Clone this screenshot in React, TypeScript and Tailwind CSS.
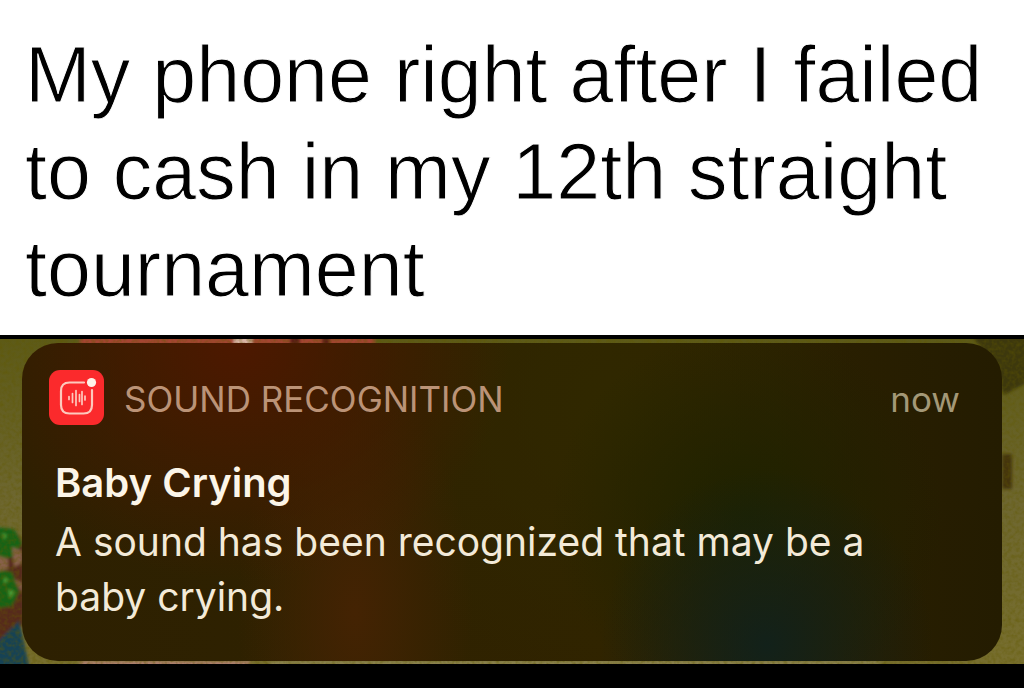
function SoundIcon() {
  return (
    <svg viewBox="0 0 55 55" className="size-[55px] shrink-0" aria-hidden="true">
      <rect width="55" height="55" rx="11" fill="#fb2a2c" />
      <path
        d="M35 12.500H20.500Q12 12.500 12 21V35Q12 43.500 20.500 43.500H34.500Q43 43.500 43 35V20"
        fill="none"
        stroke="#fdc9bd"
        strokeWidth="2.200"
        strokeLinecap="round"
      />
      <path
        d="M20 26.500v3M23.500 23.500v9M27 20.500v15M30.500 24.500v7M33 21.500v13M36 26v4"
        fill="none"
        stroke="#fdc9bd"
        strokeWidth="1.700"
        strokeLinecap="round"
      />
      <circle cx="42.500" cy="12.500" r="4.600" fill="#fff3e8" />
    </svg>
  );
}

function Garden() {
  return (
    <svg
      viewBox="0 0 1024 325"
      preserveAspectRatio="none"
      className="absolute inset-0 size-full"
      aria-hidden="true"
    >
      <defs>
        <filter id="soft" x="-20%" y="-20%" width="140%" height="140%">
          <feGaussianBlur stdDeviation="1.5" />
        </filter>
        <filter id="grain" x="0" y="0" width="100%" height="100%">
          <feTurbulence type="fractalNoise" baseFrequency="0.25" numOctaves="2" seed="4" />
          <feColorMatrix values="0 0 0 0 0.12  0 0 0 0 0.1  0 0 0 0 0  0 1.6 0 0 -0.6" />
        </filter>
        <linearGradient id="grass" x1="0" y1="0" x2="0" y2="1">
          <stop offset="0" stopColor="#5d5a18" />
          <stop offset="0.5" stopColor="#6e6730" />
          <stop offset="1" stopColor="#776e2e" />
        </linearGradient>
      </defs>
      <rect width="1024" height="325" fill="url(#grass)" />
      <g filter="url(#soft)">
        <path d="M80 -6H375V6H80z" fill="#a54432" />
        <path d="M234 -6h18v12h-18z" fill="#d9b3a4" />
        <path d="M290 -6h10v12h-10zM322 -6h8v12h-8z" fill="#5a1d12" />
        <path d="M970 -6H1030V42L1004 56L985 14z" fill="#3c3909" />
        <path d="M1002 115h10v35h-10z" fill="#45340f" />
        <path d="M-6 190Q20 185 24 210V285L-6 310z" fill="#572b1b" />
        <path d="M-6 188l20 2 8 14-8 14-20 3zM-6 230l18 3 7 20-7 14-18 3z" fill="#176416" />
        <path d="M12 208l10 4v12l-8 4zM-4 216l12 4v10l-12 3zM14 240l8 4v10z" fill="#87604a" />
        <path d="M2 194l5 2-3 5zM8 250l7 3-5 7zM4 238l5 3-5 4z" fill="#4c9b35" />
        <path d="M-6 306L19 282L30 331H-6z" fill="#174354" />
        <path d="M80 322H250V331H80z" fill="#ad806d" />
        <path d="M270 322H880V331H270z" fill="#8b8250" />
      </g>
      <rect width="1024" height="325" filter="url(#grain)" opacity="0.6" />
    </svg>
  );
}

export default function App() {
  return (
    <main className="flex min-h-screen flex-col bg-black font-['Inter','Liberation_Sans',sans-serif]">
      <header className="bg-white px-[25px] pt-[26px] pb-[18px]">
        <h1 className="font-['Liberation_Sans',Arial,sans-serif] text-[79px] leading-[97px] text-black [-webkit-text-stroke:1px_white]">
          My phone right after I failed
          <br />
          to cash in my 12th straight
          <br />
          tournament
        </h1>
      </header>

      <section className="relative mt-1 mb-6 px-[22px] pt-1 pb-[3px]">
        <Garden />
        <article className="relative rounded-[36px] bg-[#2d2202] bg-[radial-gradient(ellipse_28%_75%_at_22%_0%,#4d1800,transparent),radial-gradient(ellipse_12%_75%_at_34%_85%,#442303,transparent),radial-gradient(ellipse_17%_55%_at_76%_95%,#12211a,transparent),radial-gradient(ellipse_20%_60%_at_74%_55%,#1e2200,transparent),radial-gradient(ellipse_25%_90%_at_60%_20%,#302800,transparent),linear-gradient(90deg,#2d2001,#302300_60%,#241c01)] pt-[27px] pr-[42px] pb-[37px] pl-[27px]">
          <div className="flex items-start gap-5">
            <SoundIcon />
            <span className="pt-0.5 text-[35px] leading-[55px] text-[#bb9377]">SOUND RECOGNITION</span>
            <time className="ml-auto pt-0.5 text-[35px] leading-[55px] text-[#a39877]">now</time>
          </div>
          <div className="mt-7 pl-[6px]">
            <h2 className="mb-[3px] text-[40px] leading-[56px] font-semibold text-[#fcf5e8]">Baby Crying</h2>
            <p className="text-[39px] leading-[55px] text-[#f3ead8]">
              A sound has been recognized that may be a<br />
              baby crying.
            </p>
          </div>
        </article>
      </section>
    </main>
  );
}
